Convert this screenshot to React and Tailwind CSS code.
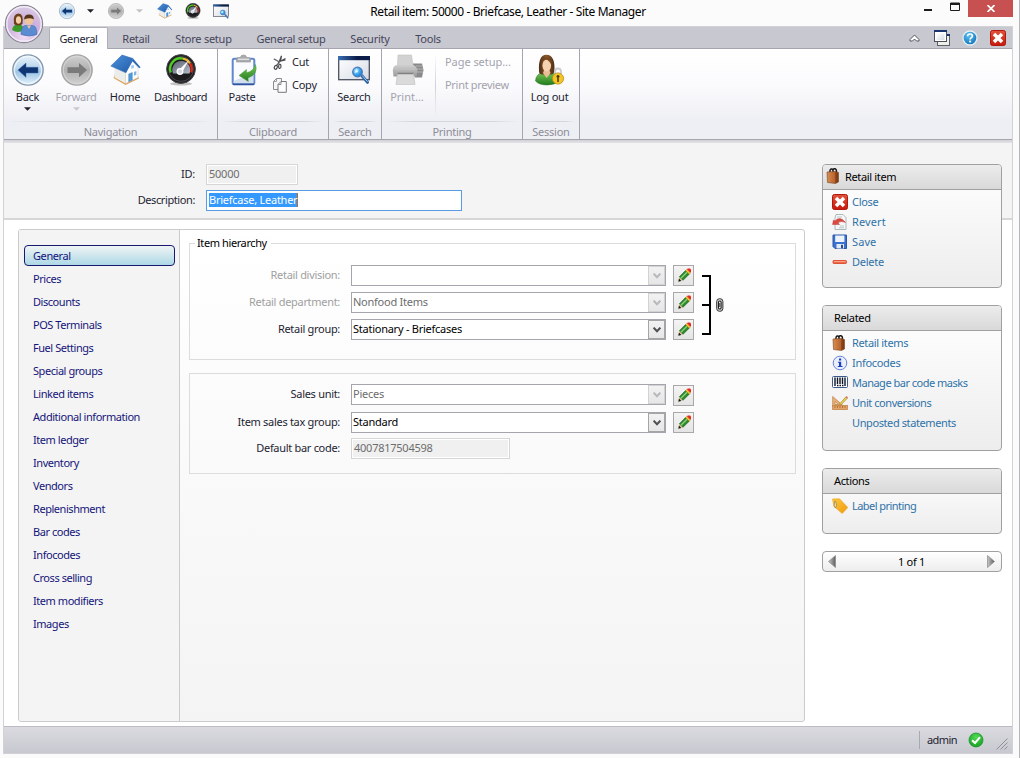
import React from "react";

const Defs = () => (
  <svg width="0" height="0" className="absolute">
    <defs>
      <linearGradient id="gBlueBall" x1="0" y1="0" x2="0" y2="1">
        <stop offset="0" stopColor="#e9f3fb" />
        <stop offset="0.45" stopColor="#b9d5ec" />
        <stop offset="0.55" stopColor="#9cc3e4" />
        <stop offset="1" stopColor="#e4f3fc" />
      </linearGradient>
      <linearGradient id="gGrayBall" x1="0" y1="0" x2="0" y2="1">
        <stop offset="0" stopColor="#d0d0d0" />
        <stop offset="0.5" stopColor="#b0b0b0" />
        <stop offset="1" stopColor="#d2d2d2" />
      </linearGradient>
      <linearGradient id="gRoof" x1="0" y1="0" x2="1" y2="1">
        <stop offset="0" stopColor="#4f93da" />
        <stop offset="1" stopColor="#1f5bab" />
      </linearGradient>
      <linearGradient id="gFace" x1="0" y1="0" x2="1" y2="1">
        <stop offset="0" stopColor="#5b6070" />
        <stop offset="1" stopColor="#b4bccb" />
      </linearGradient>
      <linearGradient id="gGreen" x1="0" y1="0" x2="0" y2="1">
        <stop offset="0" stopColor="#7cc85a" />
        <stop offset="1" stopColor="#1f7a1c" />
      </linearGradient>
      <linearGradient id="gHair" x1="0" y1="0" x2="1" y2="0">
        <stop offset="0" stopColor="#4e2d14" />
        <stop offset="0.5" stopColor="#8d5a2c" />
        <stop offset="1" stopColor="#4e2d14" />
      </linearGradient>
      <linearGradient id="gNavy" x1="0" y1="0" x2="1" y2="0">
        <stop offset="0" stopColor="#3a6fb5" />
        <stop offset="0.6" stopColor="#0b1c48" />
        <stop offset="1" stopColor="#0b1c48" />
      </linearGradient>
      <linearGradient id="gPaper" x1="0" y1="0" x2="1" y2="1">
        <stop offset="0" stopColor="#ffffff" />
        <stop offset="1" stopColor="#d6dbe4" />
      </linearGradient>
      <radialGradient id="gLens" cx="0.35" cy="0.35" r="0.8">
        <stop offset="0" stopColor="#b9ecff" />
        <stop offset="0.5" stopColor="#3aa6f0" />
        <stop offset="1" stopColor="#1764c8" />
      </radialGradient>
      <linearGradient id="gRed" x1="0" y1="0" x2="0" y2="1">
        <stop offset="0" stopColor="#e0543c" />
        <stop offset="1" stopColor="#c61a0c" />
      </linearGradient>
      <linearGradient id="gBag" x1="0" y1="0" x2="1" y2="0">
        <stop offset="0" stopColor="#d98d52" />
        <stop offset="0.7" stopColor="#b5622c" />
        <stop offset="0.75" stopColor="#8a4319" />
        <stop offset="1" stopColor="#7a3813" />
      </linearGradient>
      <linearGradient id="gTag" x1="0" y1="0" x2="1" y2="1">
        <stop offset="0" stopColor="#ffc93a" />
        <stop offset="1" stopColor="#f09a10" />
      </linearGradient>
      <linearGradient id="gPrn" x1="0" y1="0" x2="0" y2="1">
        <stop offset="0" stopColor="#cfcfcf" />
        <stop offset="1" stopColor="#9a9a9a" />
      </linearGradient>
      <radialGradient id="gOk" cx="0.5" cy="0.3" r="0.8">
        <stop offset="0" stopColor="#57d957" />
        <stop offset="1" stopColor="#0b9a1a" />
      </radialGradient>
      <radialGradient id="gHelp" cx="0.4" cy="0.3" r="0.8">
        <stop offset="0" stopColor="#5cc0f0" />
        <stop offset="1" stopColor="#0b6bb4" />
      </radialGradient>
      <radialGradient id="gOrb" cx="0.5" cy="0.85" r="0.9">
        <stop offset="0" stopColor="#efdcf4" />
        <stop offset="0.5" stopColor="#cdb0dc" />
        <stop offset="1" stopColor="#dcd0e4" />
      </radialGradient>
      <linearGradient id="gArrowL" x1="0" y1="0" x2="1" y2="0">
        <stop offset="0" stopColor="#c8c8c8" />
        <stop offset="1" stopColor="#5e5e5e" />
      </linearGradient>
    </defs>
  </svg>
);

const Svg = ({ size, w, h, vb = "0 0 32 32", children, className = "" }) => (
  <svg width={w || size} height={h || size} viewBox={vb} className={"block shrink-0 " + className}>
    {children}
  </svg>
);

const Back = ({ size }) => (
  <Svg size={size}>
    <circle cx="16" cy="16" r="15.2" fill="url(#gBlueBall)" stroke="#8496aa" strokeWidth="1.300" />
    <circle cx="16" cy="16" r="13.600" fill="none" stroke="#f2f9fe" strokeWidth="1.400" opacity="0.8" />
    <path d="M6 16 L14 9 V13.300 H26 V19 H14 V23.300 Z" fill="#0f3672" stroke="#3b68a4" strokeWidth="0.500" />
  </Svg>
);

const Forward = ({ size }) => (
  <Svg size={size}>
    <circle cx="16" cy="16" r="15.2" fill="url(#gGrayBall)" stroke="#a4a4a4" strokeWidth="1.300" />
    <circle cx="16" cy="16" r="13.600" fill="none" stroke="#dadada" strokeWidth="1.200" opacity="0.7" />
    <path d="M26 16 L18 9 V13.300 H6.500 V19 H18 V23.300 Z" fill="#7a7a7a" />
  </Svg>
);

const Home = ({ size }) => (
  <Svg size={size}>
    <path d="M3.500 24 L15.500 31 L29 24.500 L28 22 L5 20 Z" fill="#dba050" />
    <path d="M4.500 13 L15.500 17 V29.500 L4.500 23.500 Z" fill="#ececea" />
    <path d="M15.500 18 L22.500 6.500 L28 14 V23.500 L15.500 29.500 Z" fill="#fbfcfd" stroke="#c9ced6" strokeWidth="0.500" />
    <path d="M18.700 20 L22.300 18.500 V26 L18.700 27.800 Z" fill="#4f9ad8" stroke="#3a70b0" strokeWidth="0.400" />
    <path d="M24 18 L26.300 17 V20.800 L24 21.800 Z" fill="#7db4e4" />
    <path d="M21.300 11.500 L23.800 11 V14 L21.300 14.700 Z" fill="#9cc4ea" />
    <path d="M0.800 12 L12 1 L23 4.500 L15.500 18.600 Z" fill="url(#gRoof)" stroke="#2a62ac" strokeWidth="0.500" />
    <path d="M23 4.500 L30.500 13.300 L29.300 14.300 L22.500 7.200 L16 19 L15.300 18.300 Z" fill="#2a68b6" />
  </Svg>
);

const Gauge = ({ size }) => (
  <Svg size={size}>
    <ellipse cx="16" cy="29.800" rx="11" ry="1.800" fill="#c2c2c2" />
    <circle cx="16" cy="15" r="14.400" fill="#1c1c1e" stroke="#4a4a4e" strokeWidth="1" />
    <circle cx="16" cy="15" r="12.400" fill="none" stroke="#55565a" strokeWidth="0.800" />
    <path d="M8 19.500 A9 9 0 1 1 24.500 19.500 Z" fill="url(#gFace)" />
    <path d="M5.800 18.500 A10.500 10.500 0 0 1 18 4.600" fill="none" stroke="#4ccf20" strokeWidth="2.300" />
    <path d="M18 4.600 A10.500 10.500 0 0 1 25 9.500" fill="none" stroke="#f0b43a" strokeWidth="2.300" />
    <path d="M25 9.500 A10.500 10.500 0 0 1 26.200 18.500" fill="none" stroke="#dd2a14" strokeWidth="2.300" />
    <path d="M13.300 16.500 L24 6 L17 18.500 Z" fill="#fff" />
    <circle cx="15" cy="17.500" r="2.800" fill="#d4d8e0" stroke="#fff" strokeWidth="1.300" />
  </Svg>
);

const WinSearch = ({ w, h }) => (
  <Svg w={w} h={h} vb="0 0 32 30">
    <rect x="0.700" y="1.700" width="30.600" height="23" fill="url(#gPaper)" stroke="#4a5060" strokeWidth="1.300" />
    <rect x="0" y="1" width="32" height="4.200" fill="url(#gNavy)" />
    <path d="M24 20.800 L29.500 27.300" stroke="#2a62a8" strokeWidth="3" strokeLinecap="round" />
    <path d="M24.500 20.800 L29.200 26.400" stroke="#a8d0f0" strokeWidth="1" strokeLinecap="round" />
    <circle cx="19.500" cy="17" r="4.800" fill="url(#gLens)" stroke="#4a7cb8" strokeWidth="1.300" />
    <path d="M16.500 18 L19 13.500 L20 17 Z" fill="#fff" opacity="0.800" />
  </Svg>
);

const Paste = () => (
  <Svg w={26} h={32} vb="0 0 26 32">
    <rect x="1.700" y="4.700" width="21.600" height="25.600" rx="1.500" fill="#fafbfe" stroke="#6088cc" strokeWidth="2" />
    <path d="M2.700 29.300 V27 L22.300 19 V29.300 Z" fill="#d3deee" />
    <path d="M2 30.300 H23" stroke="#2f55a0" strokeWidth="1.600" />
    <path d="M5.500 8 V5 Q5.500 3.500 7.500 3.500 H9.500 Q9.500 1 12.500 1 Q15.500 1 15.500 3.500 H17.500 Q19.500 3.500 19.500 5 V8 Z" fill="#a9abae" stroke="#909296" strokeWidth="0.600" />
    <path d="M7 5.300 H18" stroke="#dcdee0" strokeWidth="1.500" />
    <path d="M8 21.500 L15.500 15.500 V18.500 Q22 18 24.500 10.500 Q27.500 20 17 24 L17.300 27.500 Z" fill="url(#gGreen)" stroke="#4b9a3c" strokeWidth="0.500" />
  </Svg>
);

const Cut = () => (
  <Svg w={13} h={15} vb="0 0 13 15">
    <path d="M5.500 8.500 L8.500 0.800 L7.500 6 M5 7.500 L12.500 3.500 M8 6 L12.500 5" stroke="#4a4a4e" strokeWidth="1.200" fill="none" />
    <path d="M0.800 3.800 L6.500 7" stroke="#6a6a6e" strokeWidth="1.400" />
    <ellipse cx="2.800" cy="12.300" rx="1.400" ry="2" fill="none" stroke="#4a4a4e" strokeWidth="1.200" transform="rotate(20 2.800 12.300)" />
    <ellipse cx="6.800" cy="11.300" rx="1.200" ry="2.200" fill="none" stroke="#4a4a4e" strokeWidth="1.200" />
    <path d="M3.500 10.500 L5.500 8" stroke="#4a4a4e" strokeWidth="1.200" />
  </Svg>
);

const Copy = () => (
  <Svg w={14} h={15} vb="0 0 14 15">
    <path d="M3.500 0.500 H8.500 V11.500 H0.500 V3.500 Z" fill="#f6f6f6" stroke="#8c8c90" strokeWidth="1" />
    <path d="M0.500 3.500 H3.500 V0.500" fill="none" stroke="#8c8c90" strokeWidth="0.800" />
    <path d="M8 3.500 H13.300 V14.300 H5 V6.500 Z" fill="#fdfdfd" stroke="#77777b" strokeWidth="1" />
    <path d="M5 6.500 H8 V3.500" fill="none" stroke="#77777b" strokeWidth="0.800" />
  </Svg>
);

const Printer = () => (
  <Svg size={32}>
    <path d="M6 1 H19.500 L21 12 H5.500 Z" fill="#d2d2d2" stroke="#c0c0c0" strokeWidth="0.600" />
    <path d="M21 9.500 H30 L31.500 16 L30 23.500 H23 Z" fill="#8a8a8a" />
    <path d="M24 12 H30 M25 15 H31 M25 18 H31" stroke="#b4b4b4" />
    <path d="M0.800 16 Q1.500 11 5.500 11 H20 Q24 11 25.500 16 L24.500 22.500 H1.500 Z" fill="url(#gPrn)" />
    <path d="M3 15.200 H23" stroke="#bfbfbf" strokeWidth="1.500" />
    <path d="M5.500 19.500 H21.500 L23 30.500 H4 Z" fill="#dadada" stroke="#c0c0c0" strokeWidth="0.600" />
    <path d="M5.500 19.500 H21.500" stroke="#808080" strokeWidth="1.500" />
  </Svg>
);

const Logout = () => (
  <Svg size={32}>
    <path d="M1.500 27 Q2 19.500 9 18.500 L17 18 Q24 19 25 27 Q21 31 13 31 Q5 31 1.500 27 Z" fill="url(#gGreen)" stroke="#2e6f20" strokeWidth="0.500" />
    <path d="M5 17 Q4 1 12.500 0.800 Q21 1 20.500 16 Q20 20 17.500 20.500 L7.500 20.500 Q5 20 5 17 Z" fill="url(#gHair)" />
    <path d="M9 19 L12.700 24 L16.500 19 L15 15 H10.500 Z" fill="#e9bd95" />
    <ellipse cx="12.700" cy="11.500" rx="4.300" ry="6" fill="#f5d3b0" />
    <path d="M8 11 Q9 5 12 5.500 Q15 6 17.500 11 Q17 3.500 12.500 3.500 Q8.500 3.500 8 11" fill="#754820" />
    <path d="M21 20 V17.500 Q21 14.500 24 14.500 Q27 14.500 27 17.500 V20" fill="none" stroke="#c9cbcf" strokeWidth="1.800" />
    <circle cx="24" cy="24.500" r="5.600" fill="#f3c527" stroke="#b98a10" strokeWidth="0.800" />
    <path d="M24 21 V28 M22.500 22.500 H25.500" stroke="#4a3708" strokeWidth="1.500" />
  </Svg>
);

const People = () => (
  <Svg size={40} vb="0 0 40 40">
    <circle cx="20" cy="20" r="18.600" fill="url(#gOrb)" stroke="#8a8592" strokeWidth="1.200" />
    <circle cx="20" cy="20" r="17.200" fill="none" stroke="#f7f1fa" strokeWidth="1.400" opacity="0.850" />
    <path d="M8 26 Q9 20.500 14 20 Q19.500 20.500 20 26 Q14 30 8 26 Z" fill="#3c9a28" />
    <path d="M10 20 Q8.500 9.500 14.500 9.500 Q20 9.500 18.500 20 Q14 23 10 20 Z" fill="#6b3f1a" />
    <ellipse cx="14.500" cy="16" rx="2.600" ry="3.800" fill="#f3cfa8" />
    <path d="M17 30.500 Q17 22 21 21.500 H29 Q33 22 33 30.500 Q25 33.500 17 30.500 Z" fill="#5b8bd0" stroke="#3c68a8" strokeWidth="0.500" />
    <circle cx="25" cy="16" r="4.500" fill="#f0c59a" />
    <path d="M20.200 15.500 Q20 10.500 25 10.500 Q30 10.500 29.800 15.500 Q26 13 20.200 15.500" fill="#57361a" />
    <path d="M23 21.500 L25 25 L27 21.500 Z" fill="#f0c59a" />
  </Svg>
);

const RedX = ({ size = 16 }) => (
  <Svg size={size} vb="0 0 16 16">
    <rect x="0.500" y="0.500" width="15" height="15" rx="2" fill="url(#gRed)" stroke="#b3160a" />
    <path d="M4 4 L12 12 M12 4 L4 12" stroke="#fff" strokeWidth="3.500" />
  </Svg>
);

const Windows = () => (
  <Svg size={16} vb="0 0 16 16">
    <rect x="3.500" y="5.500" width="12" height="10" fill="#efefe8" stroke="#5a5f68" />
    <rect x="9" y="4" width="7" height="2" fill="#17366e" />
    <rect x="0.500" y="1" width="12" height="10.500" fill="#fff" stroke="#4a5060" />
    <rect x="2.500" y="3.500" width="8" height="6.500" fill="url(#gPaper)" />
    <rect x="0" y="0" width="13" height="2" fill="#17366e" />
  </Svg>
);

const Help = () => (
  <Svg size={16} vb="0 0 16 16">
    <circle cx="8" cy="8" r="7" fill="url(#gHelp)" stroke="#e3eef5" strokeWidth="1.300" />
    <path d="M5.600 6.200 Q5.600 4 8 4 Q10.400 4 10.400 6 Q10.400 7.200 9 7.900 Q8.100 8.400 8.100 9.500" fill="none" stroke="#fff" strokeWidth="1.700" />
    <rect x="7.200" y="10.600" width="1.900" height="1.800" fill="#fff" />
  </Svg>
);

const Bag = () => (
  <Svg size={16} vb="0 0 16 16">
    <path d="M4 5 Q3.500 0.500 6 1 Q7.500 1.500 7 5 M7 4 Q6.500 0.300 9 0.800 Q11 1.300 10.300 4.500" fill="none" stroke="#151515" strokeWidth="1.500" />
    <path d="M1 4 L9 3.500 L12.500 4.500 V14 L9.500 15.500 L1.500 14.500 Z" fill="url(#gBag)" stroke="#7a4420" strokeWidth="0.600" />
  </Svg>
);

const Revert = () => (
  <Svg size={16} vb="0 0 16 16">
    <path d="M4 0.500 H11 L14 3.500 V15.500 H3 V4 Z" fill="#f4f7f7" stroke="#a6b0b2" strokeWidth="0.900" />
    <path d="M5 3 H10 M8 12 H12 M7 13.800 H12" stroke="#aebcbc" strokeWidth="0.800" />
    <path d="M0.500 10.500 L1.500 6 L3 7 Q8 1.500 13.500 8.500 Q9 6.200 6 8.800 L7.500 10.500 Z" fill="#dc4a44" stroke="#b5281f" strokeWidth="0.400" />
  </Svg>
);

const Save = () => (
  <Svg size={16} vb="0 0 16 16">
    <path d="M1 1 H14.500 V14.500 H3 L1 12.500 Z" fill="#3a72d0" stroke="#2a55a8" />
    <rect x="3.200" y="1.500" width="9.200" height="6.500" fill="#eef3fa" />
    <rect x="4.500" y="10" width="7.500" height="4.500" fill="#e4eaf2" />
    <rect x="9" y="10.800" width="2" height="3.500" fill="#274f94" />
  </Svg>
);

const Delete = () => (
  <Svg size={16} vb="0 0 16 16">
    <rect x="1" y="6.500" width="13.500" height="3" rx="0.800" fill="#f0694a" stroke="#d9482a" strokeWidth="0.900" />
    <path d="M2 7.500 H13.500" stroke="#f9a891" strokeWidth="0.900" />
  </Svg>
);

const Info = () => (
  <Svg size={16} vb="0 0 16 16">
    <circle cx="8" cy="8" r="6.800" fill="#eaeffc" stroke="#6a82d4" strokeWidth="1" />
    <rect x="7" y="3.500" width="2.200" height="2" fill="#1d3fc4" />
    <path d="M6 6.800 H9.200 V11 H10.500 V12 H5.800 V11 H7 V7.800 H6 Z" fill="#1d3fc4" />
  </Svg>
);

const Barcode = () => (
  <Svg size={16} vb="0 0 16 16">
    <rect x="0.500" y="1.500" width="15" height="11" rx="1" fill="#fff" stroke="#3c5a8a" />
    <path d="M3 2.500 V11 M5.500 2.500 V9 M8 2.500 V9 M10.500 2.500 V9 M13 2.500 V11" stroke="#0b1424" strokeWidth="1.400" />
    <path d="M5 10.500 H12" stroke="#0b1424" strokeWidth="1.400" strokeDasharray="1.500 1" />
  </Svg>
);

const Ruler = () => (
  <Svg size={16} vb="0 0 16 16">
    <path d="M0.700 1.500 L12 11.500 H0.700 Z M3 6.500 V9.500 H6.500 Z" fill="#e9b27a" stroke="#c2844c" strokeWidth="0.800" fillRule="evenodd" />
    <path d="M8 8.500 L14 1.800 L15.500 3 L9.300 9.600 L7.500 10.200 Z" fill="#f1d34a" stroke="#8f7420" strokeWidth="0.600" />
    <path d="M13.500 2.300 L14.500 1 L16 2.300 L15 3.500 Z" fill="#d97a7a" />
    <rect x="0.600" y="10.500" width="14.800" height="4" fill="#e3a468" stroke="#c2844c" strokeWidth="0.800" />
    <path d="M3 11 V13 M5.500 11 V13 M8 11 V13 M10.500 11 V13 M13 11 V13" stroke="#a05f2a" strokeWidth="0.700" />
  </Svg>
);

const Tag = () => (
  <Svg size={16} vb="0 0 16 16">
    <path d="M0.500 1 L7.500 0.800 L15.800 9.500 L10.200 15.500 L2 8.500 Z" fill="url(#gTag)" stroke="#e8a420" strokeWidth="0.600" />
    <path d="M3 2.800 Q1 8 3.500 10 Q5.500 8 3.800 3.500 Z" fill="#f6dc94" stroke="#8c7a4a" strokeWidth="0.700" />
  </Svg>
);

const Pencil = () => (
  <Svg w={13} h={14} vb="0 0 13 14">
    <path d="M0.500 13.300 L1.300 8.800 L5 12.500 Z" fill="#e9c88a" />
    <path d="M0.300 13.700 L1 10.600 L3.300 12.900 Z" fill="#161616" />
    <path d="M1.400 8.800 L7.500 2.600 L11.200 6.200 L5 12.300 Z" fill="#2e8a2c" stroke="#14571a" strokeWidth="0.600" />
    <path d="M2.900 10.300 L9 4.200" stroke="#8ed27c" strokeWidth="1.300" />
    <path d="M7.500 2.600 L8.700 1.400 L12.400 5 L11.200 6.200 Z" fill="#f3c62c" stroke="#a07a18" strokeWidth="0.400" />
    <path d="M8.900 1.300 L9.800 0.400 H12 L13 1.500 V4 L12.300 4.800 Z" fill="#e8281c" />
  </Svg>
);

const Ok = () => (
  <Svg size={16} vb="0 0 16 16">
    <circle cx="8" cy="8" r="7" fill="url(#gOk)" stroke="#0f8f1c" strokeWidth="0.700" />
    <path d="M4 8.200 L7 11 L12 5.200" fill="none" stroke="#fff" strokeWidth="2" />
  </Svg>
);

const Chain = () => (
  <Svg w={8} h={14} vb="0 0 8 14">
    <rect x="0.700" y="0.700" width="6.200" height="12.600" rx="2.800" fill="#cfcfcf" stroke="#333" strokeWidth="1" />
    <rect x="2.500" y="3" width="2.600" height="8" rx="1.300" fill="#fff" stroke="#222" strokeWidth="1.100" />
    <path d="M3.800 5 V9" stroke="#333" strokeWidth="1" />
  </Svg>
);

const Caret = ({ color = "#22222e" }) => (
  <svg width="7" height="4" viewBox="0 0 7 4" className="block shrink-0">
    <path d="M0 0.200 H7 L3.500 3.800 Z" fill={color} />
  </svg>
);

const Big = ({ className, icon, label, caret, off }) => (
  <div className={"flex flex-col items-center " + className}>
    <div className="flex h-8 items-center">{icon}</div>
    <div className={"mt-[3px] h-4 leading-4 whitespace-nowrap " + (off ? "text-[#a3a3ad]" : "text-[#1e1e32]")}>{label}</div>
    {caret && (
      <div className="mt-[2px]">
        <Caret color={off ? "#c9c9cf" : "#22222e"} />
      </div>
    )}
  </div>
);

const Group = ({ className, title, children }) => (
  <div className={"flex h-full shrink-0 flex-col border-r border-[#a5a5b0] " + className}>
    <div className="flex h-[72px] shrink-0 pt-[5px]">{children}</div>
    <div className="mx-1 h-px shrink-0 bg-[linear-gradient(to_right,transparent,#d5d5dc_20%,#d5d5dc_80%,transparent)]" />
    <div className="h-[17px] shrink-0 text-center leading-5 text-[#8d8d98]">{title}</div>
  </div>
);

const tabs = [
  ["Retail", "w-14"],
  ["Store setup", "w-[79px]"],
  ["General setup", "w-24"],
  ["Security", "w-[62px]"],
  ["Tools", "w-[54px]"],
];

const nav = [
  "Prices", "Discounts", "POS Terminals", "Fuel Settings", "Special groups", "Linked items",
  "Additional information", "Item ledger", "Inventory", "Vendors", "Replenishment", "Bar codes",
  "Infocodes", "Cross selling", "Item modifiers", "Images",
];

const Combo = ({ value, off }) => (
  <div className="flex h-[21px] w-[315px] border border-[#a5a5ad] bg-white">
    <div className={"flex-1 pl-[1px] leading-[18px] whitespace-pre " + (off ? "text-[#6d6d6d]" : "text-black")}>{value}</div>
    <div
      className={
        "flex w-[17px] items-center justify-center border bg-[linear-gradient(#f2f2f2,#e6e6e6)] " +
        (off ? "border-[#d2d2d2]" : "border-[#a5a5a5]")
      }
    >
      <svg width="8" height="6" viewBox="0 0 8 6" className="block">
        <path d="M0.600 0.600 L4 4.200 L7.400 0.600" fill="none" stroke={off ? "#b9b9b9" : "#505050"} strokeWidth="2" />
      </svg>
    </div>
  </div>
);

const EditButton = ({ className = "" }) => (
  <div className={"ml-[7px] flex h-[21px] w-[21px] items-center justify-center border border-[#a8a8a8] bg-[linear-gradient(#f4f4f4,#e4e4e4)] pl-[2px] pb-px " + className}>
    <Pencil />
  </div>
);

const Row = ({ label, muted, className = "", children }) => (
  <div className={"flex h-[21px] " + className}>
    <div className={"mr-[11px] w-[150px] text-right leading-5 tracking-[-0.3px] whitespace-nowrap " + (muted ? "text-[#a0a0a0]" : "text-[#1e1e32]")}>{label}</div>
    {children}
  </div>
);

const ReadOnly = ({ className, children }) => (
  <div className={"h-[21px] border border-[#d6d6d6] bg-white p-px " + className}>
    <div className="h-full bg-[#f0f0f0] pl-[1px] leading-[15px] text-[#6d6d6d]">{children}</div>
  </div>
);

const Card = ({ className, title, icon, items }) => (
  <div className={"flex flex-col overflow-hidden rounded-[4px] border border-[#a0a0a0] bg-[linear-gradient(#ffffff,#ededed)] " + className}>
    <div className="flex h-[25px] shrink-0 items-center border-b border-[#a0a0a0] bg-[linear-gradient(#ececec,#d9d9d9)] tracking-[-0.35px] text-black">
      {icon ? <div className="mr-[3px] mb-[2px] ml-[3px]">{icon}</div> : <div className="w-[11px]" />}
      {title}
    </div>
    <div className="flex flex-col pt-[2px] pl-[9px]">
      {items.map(([label, glyph, tracking = "tracking-[-0.45px]"]) => (
        <div key={label} className="flex h-5 items-center text-[#2f72a8]">
          <div className="mr-1 w-4">{glyph}</div>
          <div className={tracking}>{label}</div>
        </div>
      ))}
    </div>
  </div>
);

export default function App() {
  return (
    <div className="relative flex h-[758px] w-[1020px] flex-col overflow-hidden border-r border-[#b4b4b8] bg-[#fbfbfb] font-['Noto_Sans',sans-serif] text-[11px] tracking-[-0.25px]">
      <Defs />
      <div className="absolute top-[4px] left-[4px] z-10">
        <People />
      </div>

      <div className="flex h-[26px] shrink-0 items-start">
        <div className="flex h-[22px] w-[230px] items-center pl-[59px]">
          <Back size={16} />
          <div className="ml-3"><Caret /></div>
          <div className="ml-[14px]"><Forward size={16} /></div>
          <div className="ml-3"><Caret color="#c4c4c8" /></div>
          <div className="ml-[14px]"><Home size={16} /></div>
          <div className="ml-3"><Gauge size={16} /></div>
          <div className="ml-3"><WinSearch w={16} h={15} /></div>
        </div>
        <div className="ml-[108px] w-[340px] text-center text-[12px] leading-6 tracking-[-0.4px] whitespace-nowrap text-black">
          Retail item: 50000 - Briefcase, Leather - Site Manager
        </div>
        <svg width="44" height="14" viewBox="0 0 44 14" className="ml-[245px] block">
          <rect x="1" y="9" width="8" height="2" fill="#1c1c1c" />
          <path d="M27.500 3 H36.500 V10.500 H27.500 Z" fill="none" stroke="#1c1c1c" strokeWidth="1" />
          <rect x="27" y="3" width="10" height="2" fill="#1c1c1c" />
        </svg>
        <div className="ml-[1px] flex h-[17px] w-[45px] items-center justify-center bg-[#c75050]">
          <svg width="8" height="7" viewBox="0 0 8 7">
            <path d="M0.500 0 L7.500 7 M7.500 0 L0.500 7" stroke="#fff" strokeWidth="1.700" />
          </svg>
        </div>
      </div>

      <div className="ml-[3px] flex h-[728px] w-[1010px] flex-col border border-[#d2d2d6]">
        <div className="flex h-[22px] shrink-0 border-b border-[#a5a5b0] bg-[#c8c8d0]">
          <div className="ml-[45px] h-[22px] w-[59px] rounded-t-[2px] border-x border-t border-[#b0b0ba] bg-white text-center leading-[22px] tracking-[-0.35px] text-[#1e1e32]">
            General
          </div>
          <div className="flex leading-6 text-[#45455a]">
            {tabs.map(([t, w]) => (
              <div key={t} className={"text-center whitespace-nowrap " + w}>{t}</div>
            ))}
          </div>
          <div className="flex-1" />
          <div className="flex items-center pr-[6px]">
            <svg width="11" height="8" viewBox="0 0 11 8" className="mr-[14px]">
              <path d="M1 5.500 L5.500 1 L10 5.500 V7 H7.500 L5.500 5 L3.500 7 H1 Z" fill="#fff" stroke="#55555f" strokeWidth="1" />
            </svg>
            <Windows />
            <div className="ml-3"><Help /></div>
            <div className="ml-3"><RedX /></div>
          </div>
        </div>

        <div className="flex h-[90px] shrink-0 bg-[linear-gradient(#ffffff,#fbfbfd_40%,#eeeff4_80%,#eeeff3)]">
          <Group className="w-[214px]" title="Navigation">
            <Big className="w-[47px]" icon={<Back size={32} />} label="Back" caret />
            <Big className="w-[50px]" icon={<div className="pl-[2px]"><Forward size={32} /></div>} label="Forward" caret off />
            <Big className="w-12" icon={<div className="pl-[2px]"><Home size={32} /></div>} label="Home" />
            <Big className="w-[63px] tracking-[-0.45px]" icon={<Gauge size={32} />} label="Dashboard" />
          </Group>
          <Group className="w-[111px]" title="Clipboard">
            <Big className="w-12" icon={<div className="pl-1"><Paste /></div>} label="Paste" />
            <div className="ml-[7px] flex flex-col text-[#1e1e32]">
              <div className="flex h-[17px] items-center gap-[6px]"><Cut />Cut</div>
              <div className="mt-[6px] flex h-[17px] items-center gap-[5px]"><Copy />Copy</div>
            </div>
          </Group>
          <Group className="w-[53px]" title="Search">
            <Big className="w-[50px]" icon={<WinSearch w={32} h={30} />} label="Search" />
          </Group>
          <Group className="w-[141px]" title="Printing">
            <Big className="w-[50px] tracking-normal" icon={<div className="pl-[1px]"><Printer /></div>} label="Print..." off />
            <div className="ml-[3px] h-[64px] w-px bg-[linear-gradient(transparent,#d0d0d8,transparent)]" />
            <div className="ml-[9px] flex flex-col whitespace-nowrap text-[#a3a3ad]">
              <div className="h-[17px] leading-[15px] tracking-[-0.05px]">Page setup...</div>
              <div className="mt-[6px] h-[17px] leading-[15px] tracking-[-0.3px]">Print preview</div>
            </div>
          </Group>
          <Group className="w-[57px]" title="Session">
            <Big className="w-[53px]" icon={<Logout />} label="Log out" />
          </Group>
        </div>

        <div className="flex h-[587px] shrink-0 border-t border-[#a5a5b0] bg-[linear-gradient(#d0d0d5_0,#e4e4e8_3px,#f4f4f4_3px,#f4f4f4_78px,#d6d6d6_78px,#d6d6d6_80px,#ffffff_80px)]">
          <div className="flex w-[802px] flex-col pl-[14px]">
            <div className="flex h-[89px] flex-col gap-[5px] pt-6">
              <div className="flex">
                <div className="w-[177px] text-right leading-5 text-[#1e1e32]">ID:</div>
                <ReadOnly className="ml-[11px] w-[92px]">50000</ReadOnly>
              </div>
              <div className="flex">
                <div className="w-[177px] text-right leading-5 tracking-[-0.4px] text-[#1e1e32]">Description:</div>
                <div className="ml-[11px] h-[21px] w-[256px] border border-[#569de5] bg-white pt-[2px] pl-[2px]">
                  <span className="block h-[14px] w-[89px] border-r border-[#c86a1a] bg-[#3399ff] leading-[13px] whitespace-nowrap text-white">Briefcase, Leather</span>
                </div>
              </div>
            </div>

            <div className="flex h-[493px] w-[787px] overflow-hidden rounded-[3px] border border-[#cbcbcb] bg-[linear-gradient(#ffffff,#f4f4f4)]">
              <div className="flex w-[161px] flex-col border-r border-[#cbcbcb] bg-[#f4f4f4] pt-[15px] pl-[5px] tracking-[-0.45px] text-[#14147a]">
                <div className="mb-px h-[21px] w-[151px] rounded-[4px] border border-[#191970] bg-[linear-gradient(#f0f4f5,#add8e6)] pl-2 leading-5 tracking-[-0.4px]">General</div>
                {nav.map((n) => (
                  <div key={n} className="h-[23px] pl-[9px] leading-[23px]">{n}</div>
                ))}
              </div>
              <div className="flex flex-col pt-[13px] pl-[9px]">
                <div className="h-[117px] w-[607px] border border-[#dcdcdc]">
                  <div className="-mt-2 ml-[5px] h-[15px] w-[76px] bg-[#fefefe] pl-[2px] leading-[13px] tracking-[-0.4px] whitespace-nowrap text-black">Item hierarchy</div>
                  <div className="mt-[14px] flex">
                    <div className="flex flex-col gap-[6px]">
                      <Row label="Retail division:" muted><Combo value="" off /><EditButton /></Row>
                      <Row label="Retail department:" muted><Combo value="Nonfood Items" off /><EditButton /></Row>
                      <Row label="Retail group:"><Combo value="Stationary - Briefcases" /><EditButton /></Row>
                    </div>
                    <div className="mt-[4px] ml-2 flex items-center">
                      <div className="h-[60px] w-[9px] border-y-2 border-r-2 border-black pt-[27px]">
                        <div className="h-[2px] bg-black" />
                      </div>
                      <div className="ml-[5px]"><Chain /></div>
                    </div>
                  </div>
                </div>

                <div className="mt-[13px] h-[101px] w-[607px] border border-[#dcdcdc] pt-[10px]">
                  <Row label="Sales unit:"><Combo value="Pieces" off /><EditButton className="mt-px" /></Row>
                  <Row label="Item sales tax group:" className="mt-[7px]"><Combo value="Standard" /><EditButton /></Row>
                  <Row label="Default bar code:" className="mt-[5px]"><ReadOnly className="w-[159px]">4007817504598</ReadOnly></Row>
                </div>
              </div>
            </div>
          </div>

          <div className="ml-4 flex w-[180px] flex-col gap-[17px] pt-6">
            <Card
              className="h-[124px]"
              title="Retail item"
              icon={<Bag />}
              items={[["Close", <RedX />, "tracking-[-0.3px]"], ["Revert", <Revert />, "tracking-[0.1px]"], ["Save", <Save />, "tracking-[0.1px]"], ["Delete", <Delete />, "tracking-[-0.25px]"]]}
            />
            <Card
              className="h-[146px]"
              title="Related"
              items={[["Retail items", <Bag />, "tracking-[-0.35px]"], ["Infocodes", <Info />, "tracking-[-0.3px]"], ["Manage bar code masks", <Barcode />, "tracking-[-0.5px]"], ["Unit conversions", <Ruler />], ["Unposted statements", null, "tracking-[-0.4px]"]]}
            />
            <Card className="h-[66px]" title="Actions" items={[["Label printing", <Tag />, "tracking-[-0.55px]"]]} />
            <div className="flex h-[21px] items-center justify-between rounded-[4px] border border-[#a0a0a0] bg-[linear-gradient(#ffffff,#ededed)] pr-[6px] pl-[5px] text-black">
              <svg width="8" height="13" viewBox="0 0 8 13"><path d="M7.500 0.500 V12.500 L0.500 6.500 Z" fill="url(#gArrowL)" stroke="#8a8a8a" strokeWidth="0.700" /></svg>
              <div className="pt-px">1 of 1</div>
              <svg width="8" height="13" viewBox="0 0 8 13"><path d="M0.500 0.500 V12.500 L7.500 6.500 Z" fill="url(#gArrowL)" stroke="#8a8a8a" strokeWidth="0.700" /></svg>
            </div>
          </div>
        </div>

        <div className="flex flex-1 items-center border-t border-[#bcbcc4] bg-[linear-gradient(#dadae0,#c8c8d0)]">
          <div className="flex-1" />
          <div className="h-[18px] w-px bg-[#a9a9b2]" />
          <div className="ml-[7px] w-[41px] tracking-[-0.6px] text-[#1e1e32]">admin</div>
          <Ok />
          <svg width="12" height="12" viewBox="0 0 12 12" className="mt-2 mr-1 ml-3">
            <path d="M0.500 11.500 L11.500 0.500 M4.500 11.500 L11.500 4.500 M8.500 11.500 L11.500 8.500" stroke="#8f8f9a" strokeWidth="1" />
          </svg>
        </div>
      </div>
    </div>
  );
}
